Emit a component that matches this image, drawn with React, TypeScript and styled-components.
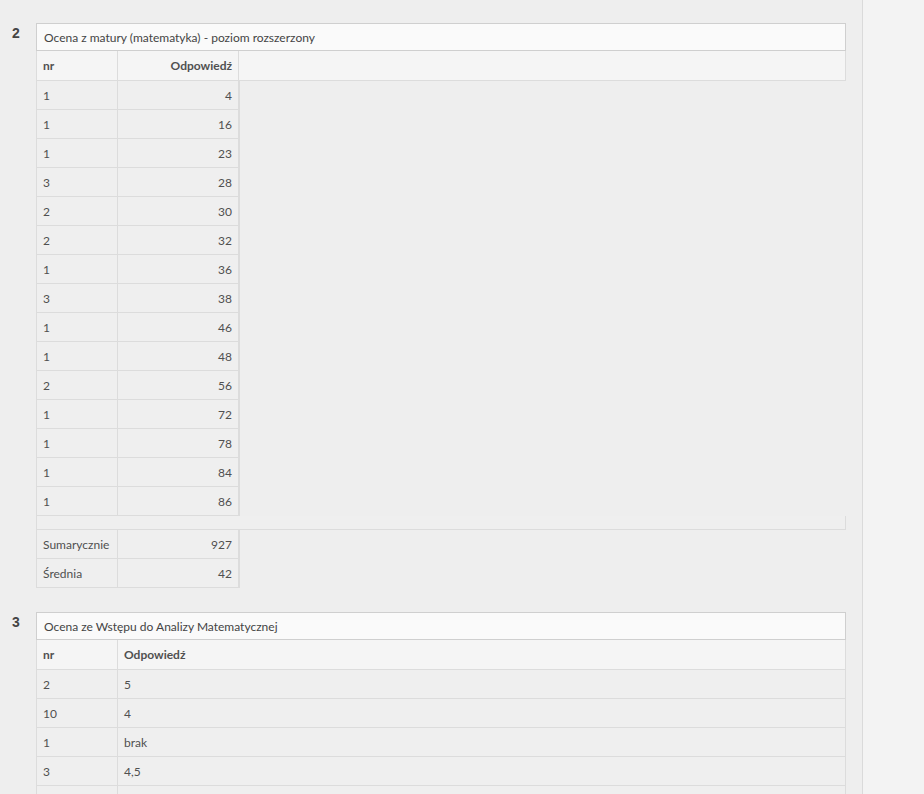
import React from "react";
import styled, { createGlobalStyle } from "styled-components";

const GlobalStyle = createGlobalStyle`
  html, body { margin: 0; padding: 0; background: #eeeeee; }
  body { font-family: Lato, "Open Sans", sans-serif; }
  * { box-sizing: border-box; }
`;

const Page = styled.div`
  display: flex;
  height: 794px;
  overflow: hidden;
`;

const Main = styled.main`
  width: 863px;
  flex: none;
  padding-top: 23px;
  border-right: 1px solid #dadada;
  background: #eeeeee;
`;

const Side = styled.aside`
  flex: 1;
  background: #f3f3f3;
`;

const Section = styled.section`
  display: flex;
  margin-bottom: 24px;
`;

const Num = styled.div`
  width: 36px;
  flex: none;
  padding: 2px 0 0 12px;
  font-family: "Liberation Sans", Arial, sans-serif;
  font-weight: bold;
  font-size: 14px;
  color: #444;
`;

const Box = styled.div`
  width: 810px;
  font-size: 12px;
  color: #505050;
`;

const Title = styled.div`
  height: 28px;
  display: flex;
  align-items: center;
  padding-left: 7px;
  background: #fafafa;
  border: 1px solid #cfcfcf;
  color: #444;
`;

const Row = styled.div<{ $h?: number; $full?: boolean; $bg?: string }>`
  display: flex;
  height: ${(p) => p.$h ?? 29}px;
  width: ${(p) => (p.$full ? "100%" : "auto")};
  align-self: flex-start;
  background: ${(p) => p.$bg ?? "#efefef"};
  border-left: 1px solid #dcdcdc;
  border-right: ${(p) => (p.$full ? "1px solid #dcdcdc" : "none")};
  border-bottom: 1px solid #dcdcdc;
`;

const Rows = styled.div`
  display: flex;
  flex-direction: column;
`;

const Cell = styled.div<{ $w?: number; $right?: boolean; $bold?: boolean }>`
  width: ${(p) => (p.$w ? `${p.$w}px` : "auto")};
  flex: ${(p) => (p.$w ? "none" : "1")};
  display: flex;
  align-items: center;
  justify-content: ${(p) => (p.$right ? "flex-end" : "flex-start")};
  padding: 0 6px 0 6px;
  border-right: 1px solid #dcdcdc;
  font-weight: ${(p) => (p.$bold ? 700 : 400)};
  &:last-child { border-right: none; }
`;

const Edge = styled.div`
  width: 1px;
  background: #dcdcdc;
`;

const data2: [string, string][] = [
  ["1", "4"], ["1", "16"], ["1", "23"], ["3", "28"], ["2", "30"], ["2", "32"],
  ["1", "36"], ["3", "38"], ["1", "46"], ["1", "48"], ["2", "56"], ["1", "72"],
  ["1", "78"], ["1", "84"], ["1", "86"],
];

const data3: [string, string][] = [
  ["2", "5"], ["10", "4"], ["1", "brak"], ["3", "4,5"], ["1", "3"],
];

export default function App() {
  return (
    <>
      <GlobalStyle />
      <Page>
        <Main>
          <Section>
            <Num>2</Num>
            <Box>
              <Title>Ocena z matury (matematyka) - poziom rozszerzony</Title>
              <Rows>
                <Row $full $h={30} $bg="#f5f5f5">
                  <Cell $w={81} $bold>nr</Cell>
                  <Cell $w={121} $right $bold>Odpowiedź</Cell>
                  <Cell />
                </Row>
                {data2.map(([a, b], i) => (
                  <Row key={i}>
                    <Cell $w={81}>{a}</Cell>
                    <Cell $w={121} $right>{b}</Cell>
                    <Edge />
                  </Row>
                ))}
                <Row $full $h={14} />
                <Row>
                  <Cell $w={81}>Sumarycznie</Cell>
                  <Cell $w={121} $right>927</Cell>
                  <Edge />
                </Row>
                <Row>
                  <Cell $w={81}>Średnia</Cell>
                  <Cell $w={121} $right>42</Cell>
                  <Edge />
                </Row>
              </Rows>
            </Box>
          </Section>
          <Section>
            <Num>3</Num>
            <Box>
              <Title>Ocena ze Wstępu do Analizy Matematycznej</Title>
              <Rows>
                <Row $full $h={30} $bg="#f5f5f5">
                  <Cell $w={81} $bold>nr</Cell>
                  <Cell $bold>Odpowiedź</Cell>
                </Row>
                {data3.map(([a, b], i) => (
                  <Row key={i} $full>
                    <Cell $w={81}>{a}</Cell>
                    <Cell>{b}</Cell>
                  </Row>
                ))}
              </Rows>
            </Box>
          </Section>
        </Main>
        <Side />
      </Page>
    </>
  );
}
